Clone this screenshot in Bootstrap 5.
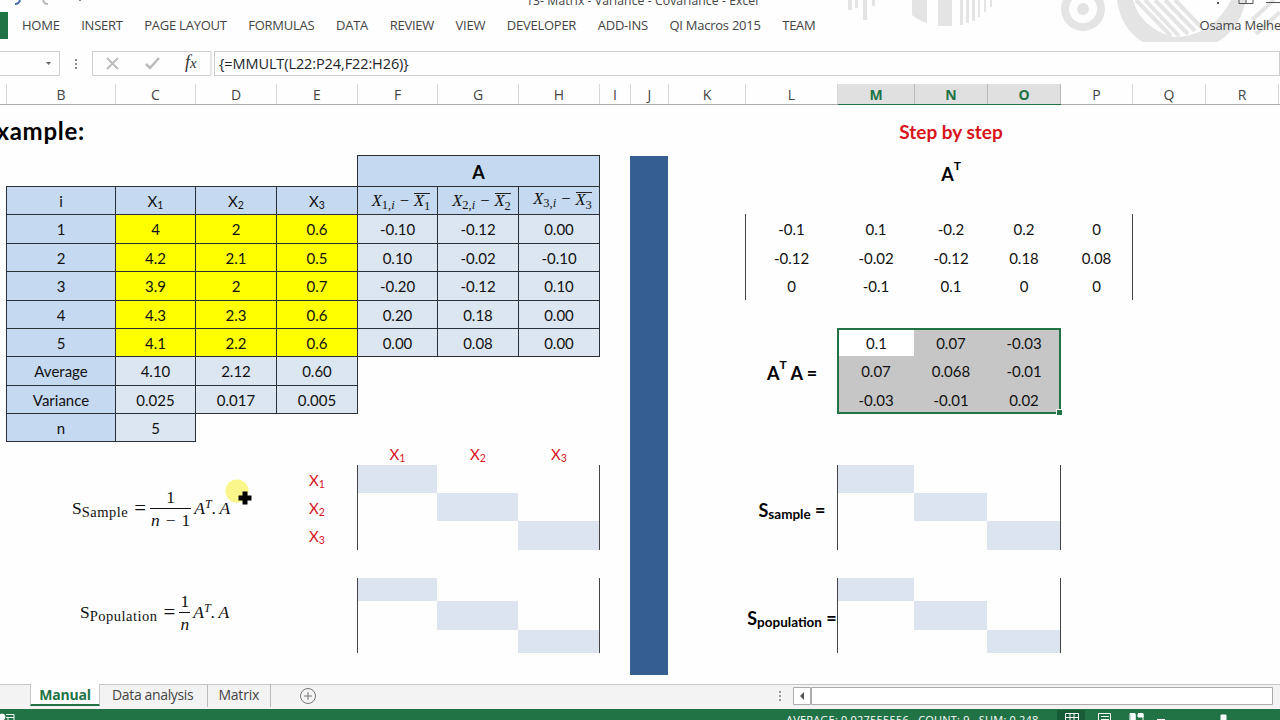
<!DOCTYPE html>
<html lang="en">
<head>
<meta charset="utf-8">
<title>13- Matrix - Variance - Covariance - Excel</title>
<link href="https://cdn.jsdelivr.net/npm/bootstrap@5.3.0/dist/css/bootstrap.min.css" rel="stylesheet">
<style>
body{width:1280px;height:720px;overflow:hidden;background:#fefefe;color:#111;font:15px/1 Lato,"Liberation Sans",sans-serif}
.ui{font-family:"Open Sans","Noto Sans",sans-serif;color:#444}
.top{height:51px}
.art{left:840px;top:0}
.caption{left:526px;top:-6px;font-size:12.2px;line-height:14px;letter-spacing:.08px}
.ribbon{height:27px;padding-top:12px}
.ribbon .file{width:8px;height:27px;background:#217346;margin-right:14px}
.menu span{font-size:13px;line-height:26px;letter-spacing:-.25px;margin-right:21.6px}
.menu .user{margin-right:-1px;letter-spacing:-.2px}
.fbar{height:26px}
.fbar .bx{border:1px solid #cfcfcf;height:25px}
.formula{font-size:14.5px;line-height:24px;letter-spacing:-.1px}
.heads,.sheet{display:grid;grid-template-columns:6px 109px 80px 81px 81px 80px 81px 81px 31px 38px 77px 92px 77px 73px 73px 72px 73px 73px 2px}
.heads{height:28px;padding-top:7px;border-bottom:1px solid #ababab}
.heads span{height:20px;border-right:1px solid #d8d8d8;text-align:center;font-size:14px;line-height:22px;position:relative;left:1px}
.heads .on{background:#e0e0e0;color:#217346;font-weight:700;border-right-color:#bbb;box-shadow:0 1px #217346}
.sheet{height:579px;grid-template-rows:50px 31px 28px 29px 28px 29px 28px 28px 29px 28px 28px 24px 28px 28px 29px 28px 23px 29px 23px 22px 9px}
.sheet>*{display:flex;align-items:center;justify-content:center;white-space:nowrap;padding:2px 0 0 1px}
.q{border:1px solid #2b2f36;margin:0 -1px -1px 0;background:#dce6f1}
.sheet>.q{padding:1px 0 0}
.h{background:#c5d9f1}.y{background:#ff0}
.f{background:#dce4ef}
.rd{color:#d8141c}
.s1{font-size:10.5px;position:relative;top:4px}
.k2{grid-column:2}.k3{grid-column:3}.k4{grid-column:4}.k5{grid-column:5}.k6{grid-column:6}.k7{grid-column:7}.k8{grid-column:8}
.k12{grid-column:12}.k13{grid-column:13}.k14{grid-column:14}.k15{grid-column:15}.k16{grid-column:16}
.r2{grid-row:2}.r3{grid-row:3}.r4{grid-row:4}.r5{grid-row:5}.r6{grid-row:6}.r7{grid-row:7}.r8{grid-row:8}.r9{grid-row:9}.r10{grid-row:10}.r11{grid-row:11}.r12{grid-row:12}.r13{grid-row:13}.r14{grid-row:14}.r15{grid-row:15}.r17{grid-row:17}.r18{grid-row:18}.r19{grid-row:19}
.kA{grid-column:6/9}
.bar{grid-column:10;grid-row:2/21;background:#365f91;margin-top:1px}
.ttl{grid-row:1;font-weight:700}
.sheet>.ex{grid-column:1/5;justify-content:flex-start;font-size:24px;letter-spacing:.7px;color:#000;margin-left:-19px}
.st{grid-column:13/16;font-size:19px;padding-left:5px!important}
.m,.mi{font-family:"Liberation Serif",serif}
.mi{font-style:italic}
.m .lo{font-size:14.5px;position:relative;top:4px;letter-spacing:.5px}
.sheet>.dv{font-size:16.5px;padding:1px 0 0 7px}
.sheet>.dv3{padding-bottom:3px}
.dv .sb{font-size:12.5px;position:relative;top:4px}
.dv .sb{font-style:normal}
.dv .ov{border-top:1px solid #222;line-height:14px}
.sheet>.eq{grid-column:2/5;justify-content:flex-start;font-size:17.5px}
.sheet>.e1{grid-row:13/16;padding:2px 0 0 66px}.sheet>.e2{grid-row:17/20;padding:0 0 6px 74px}
.es{font-size:21px;margin:0 4px 0 6px}
.fr{display:inline-flex;flex-direction:column;align-items:center;line-height:22px;margin-right:3px}
.fr span{padding:0 1px}
.fr span+span{word-spacing:1.5px}
.fr span:first-child{border-bottom:1.3px solid #111;align-self:stretch;text-align:center}
.up{font-size:12px;position:relative;top:-5px}
.det{border:solid #444;border-width:0 1px;margin-right:-1px}
.g1{grid-row:13/16}.g2{grid-row:17/20}.gl{grid-column:6/9}.gr{grid-column:13/16}
.gt{grid-column:12/17;grid-row:4/7}
.sel{grid-column:13/16;grid-row:8/11;border:2px solid #217346;margin:0 -1px -1px 0;background:#c6c6c6;position:relative}
.sel i{position:absolute;right:-3px;bottom:-3px;width:5px;height:5px;background:#217346;outline:1px solid #fff}
.sheet>.hot{background:#fff;margin:2px 0 0 2px;padding:0;z-index:1}
.z{z-index:1}
.bt{font-weight:700;font-size:18px;color:#000}
.sheet>.k14.bt{padding-top:6px}
.sheet>.k12.bt{padding-top:5px;padding-left:2px}
.bt .up{font-size:12px;top:-8px}
.bt .lo{font-size:13.5px;position:relative;top:5px}
.tabs{height:25px;background:#f3f3f3;border-top:1px solid #c6c6c6;font-size:14px}
.tab{height:22px;line-height:20px;text-align:center}
.tab.act{width:70px;margin-left:30px;margin-top:-1px;line-height:22px;background:#fff;color:#217346;font-weight:700;letter-spacing:-.2px;border:1px solid #c6c6c6;border-width:0 1px 2px;border-bottom-color:#217346}
.t2{padding:0 14px 0 12px;border-right:1px solid #bbb;letter-spacing:-.35px}
.t3{padding:0 11px 0 10px;border-right:1px solid #bbb;letter-spacing:-.2px}
.status{height:11px;background:#217346;overflow:hidden}
.stt{color:#fff;font-size:11px;line-height:14px;left:786px;top:4px;white-space:pre;letter-spacing:.2px}
.ptr{left:224px;top:478px}
</style>
</head>
<body class="position-relative">
<div class="ui top position-relative">
<svg class="art position-absolute" width="440" height="44" fill="#e4e4e4"><path d="M8 0h4v10H8zM15 0h3v8h-3zM23 0h4v20h-4zM32 0h3v6h-3zM72 0h15v23q-9-3-15-8zM98 0h14v26H98zM120 0h3v25h-3zM126 0h3v23h-3zM132 0h3v21h-3zM138 0h2v17h-2zM144 0h2v12h-2zM150 0h2v7h-2z"/><circle cx="243" cy="9" r="18" fill="none" stroke="#e4e4e4" stroke-width="8"/><circle cx="243" cy="9" r="6"/><path d="M277 0h16q8 28 40 37q39 0 58-37h15q-6 29-29 42h-74q-22-13-26-42z"/><g stroke="#e4e4e4" stroke-width="4"><path d="M296 0l35 36M305 0l34 36M315 0l33 34M325 0l30 31M335 0l26 27M412 20l22-20M416 34l24-22"/></g></svg>
<svg class="position-absolute start-0 top-0" width="90" height="8" fill="none" stroke-width="2"><path d="M20 0q-1 4-5 4" stroke="#4468a8"/><path d="M43 0q1 4 5 4" stroke="#bbb"/><path d="M80 0v1" stroke="#888"/></svg>
<div class="caption position-absolute text-nowrap">13- Matrix - Variance - Covariance - Excel</div>
<svg class="position-absolute end-0 top-0" width="70" height="6" stroke="#555" fill="none"><path d="M8 2v2" stroke-width="2"/><path d="M29 0v3.500h14V0M36 0v3M56 2.500h14"/></svg>
<div class="ribbon d-flex"><div class="file"></div><div class="menu d-flex text-nowrap flex-grow-1"><span>HOME</span><span>INSERT</span><span>PAGE LAYOUT</span><span>FORMULAS</span><span>DATA</span><span>REVIEW</span><span>VIEW</span><span>DEVELOPER</span><span>ADD-INS</span><span>QI Macros 2015</span><span>TEAM</span><span class="user ms-auto position-relative">Osama Melhe</span></div></div>
</div>
<div class="fbar ui d-flex">
<svg width="60" height="26"><path d="M-1 .5H59.500V24.500H-1" fill="none" stroke="#cfcfcf"/><path d="M46 11h5l-2.500 3z" fill="#666"/></svg>
<svg width="32" height="26" fill="#888"><path d="M15 8h2v2h-2zM15 12h2v2h-2zM15 16h2v2h-2z"/></svg>
<svg width="122" height="26" fill="none"><path d="M.5 .5h118.500v24H.5z" stroke="#cfcfcf"/><path d="M15 7l11 11M26 7l-11 11" stroke="#bbb" stroke-width="1.800"/><path d="M54 13l4 4 9-10" stroke="#bbb" stroke-width="2.500"/><text x="93" y="17" fill="#333" font-family="Liberation Serif" font-style="italic" font-size="18">f<tspan font-size="15">x</tspan></text></svg>
<div class="bx flex-grow-1 ps-1 text-dark formula">{=MMULT(L22:P24,F22:H26)}</div>
</div>
<div class="heads ui"><span></span><span>B</span><span>C</span><span>D</span><span>E</span><span>F</span><span>G</span><span>H</span><span>I</span><span>J</span><span>K</span><span>L</span><span class="on">M</span><span class="on">N</span><span class="on">O</span><span>P</span><span>Q</span><span>R</span><span class="border-0"></span></div>
<main class="sheet">
<div class="ttl ex">Example:</div><div class="ttl st rd">Step by step</div>
<div class="bar"></div>
<div class="q h kA r2 bt">A</div>
<div class="q h k2 r3">i</div><div class="q h k3 r3">X<span class="s1">1</span></div><div class="q h k4 r3">X<span class="s1">2</span></div><div class="q h k5 r3">X<span class="s1">3</span></div>
<div class="q h k6 r3 mi dv">X<span class="sb">1,<i>i</i></span>&nbsp;−&nbsp;<span class="ov">X<span class="sb">1</span></span></div>
<div class="q h k7 r3 mi dv">X<span class="sb">2,<i>i</i></span>&nbsp;−&nbsp;<span class="ov">X<span class="sb">2</span></span></div>
<div class="q h k8 r3 mi dv dv3">X<span class="sb">3,<i>i</i></span>&nbsp;−&nbsp;<span class="ov">X<span class="sb">3</span></span></div>
<div class="q h k2 r4">1</div><div class="q y k3 r4">4</div><div class="q y k4 r4">2</div><div class="q y k5 r4">0.6</div><div class="q k6 r4">-0.10</div><div class="q k7 r4">-0.12</div><div class="q k8 r4">0.00</div>
<div class="q h k2 r5">2</div><div class="q y k3 r5">4.2</div><div class="q y k4 r5">2.1</div><div class="q y k5 r5">0.5</div><div class="q k6 r5">0.10</div><div class="q k7 r5">-0.02</div><div class="q k8 r5">-0.10</div>
<div class="q h k2 r6">3</div><div class="q y k3 r6">3.9</div><div class="q y k4 r6">2</div><div class="q y k5 r6">0.7</div><div class="q k6 r6">-0.20</div><div class="q k7 r6">-0.12</div><div class="q k8 r6">0.10</div>
<div class="q h k2 r7">4</div><div class="q y k3 r7">4.3</div><div class="q y k4 r7">2.3</div><div class="q y k5 r7">0.6</div><div class="q k6 r7">0.20</div><div class="q k7 r7">0.18</div><div class="q k8 r7">0.00</div>
<div class="q h k2 r8">5</div><div class="q y k3 r8">4.1</div><div class="q y k4 r8">2.2</div><div class="q y k5 r8">0.6</div><div class="q k6 r8">0.00</div><div class="q k7 r8">0.08</div><div class="q k8 r8">0.00</div>
<div class="q h k2 r9">Average</div><div class="q k3 r9">4.10</div><div class="q k4 r9">2.12</div><div class="q k5 r9">0.60</div>
<div class="q h k2 r10">Variance</div><div class="q k3 r10">0.025</div><div class="q k4 r10">0.017</div><div class="q k5 r10">0.005</div>
<div class="q h k2 r11">n</div><div class="q k3 r11">5</div>
<div class="k6 r12 rd">X<span class="s1">1</span></div><div class="k7 r12 rd">X<span class="s1">2</span></div><div class="k8 r12 rd">X<span class="s1">3</span></div>
<div class="k5 r13 rd">X<span class="s1">1</span></div><div class="k5 r14 rd">X<span class="s1">2</span></div><div class="k5 r15 rd">X<span class="s1">3</span></div>
<div class="f k6 r13"></div><div class="f k7 r14"></div><div class="f k8 r15"></div><div class="f k6 r17"></div><div class="f k7 r18"></div><div class="f k8 r19"></div>
<div class="f k13 r13"></div><div class="f k14 r14"></div><div class="f k15 r15"></div><div class="f k13 r17"></div><div class="f k14 r18"></div><div class="f k15 r19"></div>
<div class="det g1 gl"></div><div class="det g2 gl"></div><div class="det g1 gr"></div><div class="det g2 gr"></div><div class="det gt"></div>
<div class="eq e1 m">S<span class="lo">Sample</span><span class="es">=</span><span class="fr"><span>1</span><span><i>n</i> − 1</span></span><i>A</i><i class="up">T</i>.<i>&thinsp;A</i></div>
<div class="eq e2 m">S<span class="lo">Population</span><span class="es">=</span><span class="fr"><span>1</span><span><i>n</i></span></span><i>A</i><i class="up">T</i>.<i>&thinsp;A</i></div>
<div class="k14 r2 bt">A<span class="up">T</span></div>
<div class="k12 r4">-0.1</div><div class="k13 r4">0.1</div><div class="k14 r4">-0.2</div><div class="k15 r4">0.2</div><div class="k16 r4">0</div>
<div class="k12 r5">-0.12</div><div class="k13 r5">-0.02</div><div class="k14 r5">-0.12</div><div class="k15 r5">0.18</div><div class="k16 r5">0.08</div>
<div class="k12 r6">0</div><div class="k13 r6">-0.1</div><div class="k14 r6">0.1</div><div class="k15 r6">0</div><div class="k16 r6">0</div>
<div class="sel"><i></i></div>
<div class="hot k13 r8">0.1</div><div class="z k14 r8">0.07</div><div class="z k15 r8">-0.03</div>
<div class="z k13 r9">0.07</div><div class="z k14 r9">0.068</div><div class="z k15 r9">-0.01</div>
<div class="z k13 r10">-0.03</div><div class="z k14 r10">-0.01</div><div class="z k15 r10">0.02</div>
<div class="k12 r9 bt">A<span class="up">T</span>&nbsp;A&nbsp;=</div>
<div class="k12 r14 bt">S<span class="lo">sample</span>&nbsp;=</div>
<div class="k12 r18 bt">S<span class="lo">population</span>&nbsp;=</div>
</main>
<div class="tabs ui d-flex">
<div class="tab act">Manual</div><div class="tab t2">Data analysis</div><div class="tab t3">Matrix</div>
<svg width="180" height="24" fill="none" stroke="#777"><circle cx="37" cy="11" r="7.500"/><path d="M33 11h8M37 7v8"/></svg>
<svg class="ms-auto" width="510" height="24"><path d="M9 6h2v2H9zM9 10h2v2H9zM9 14h2v2H9z" fill="#999"/><path d="M23.500 2.500h17v17h-17zM41.500 2.500h461v17h-461z" fill="#fff" stroke="#ababab"/><path d="M34 7v8l-4-4z" fill="#555"/></svg>
</div>
<div class="status ui position-relative">
<svg class="position-absolute start-0 top-0" width="20" height="11" fill="none" stroke="#fff"><circle cx="2" cy="8" r="3" fill="#fff"/><path d="M6 5.500h8V11M6 8.500h8M8 11V8"/></svg>
<div class="stt position-absolute">AVERAGE: 0.027555556   COUNT: 9   SUM: 0.248</div>
<svg class="position-absolute end-0 top-0" width="230" height="11" fill="none" stroke="#fff"><path d="M7 1h28v10H7z" fill="#185c37" stroke="none"/><path d="M15.500 11V4.500h13V11M15.500 8.500h13M20 4v7M24 4v7M48.500 11V4.500h12V11M51 7.500h8M51 10.500h8M80 4.500h5V11M80 4.500V11M88 4.500h5V11M107 10.500h8"/><path d="M81 5h4v6h-4zM88 5h5v3h-5zM171 6h5v5h-5z" fill="#fff"/></svg>
</div>
<svg class="ptr position-absolute" width="30" height="30"><circle cx="13" cy="13" r="11.500" fill="#fbf68c"/><path d="M18.500 13.500h5v4h4v5h-4v4h-5v-4h-4v-5h4z" fill="#000"/></svg>
</body>
</html>
